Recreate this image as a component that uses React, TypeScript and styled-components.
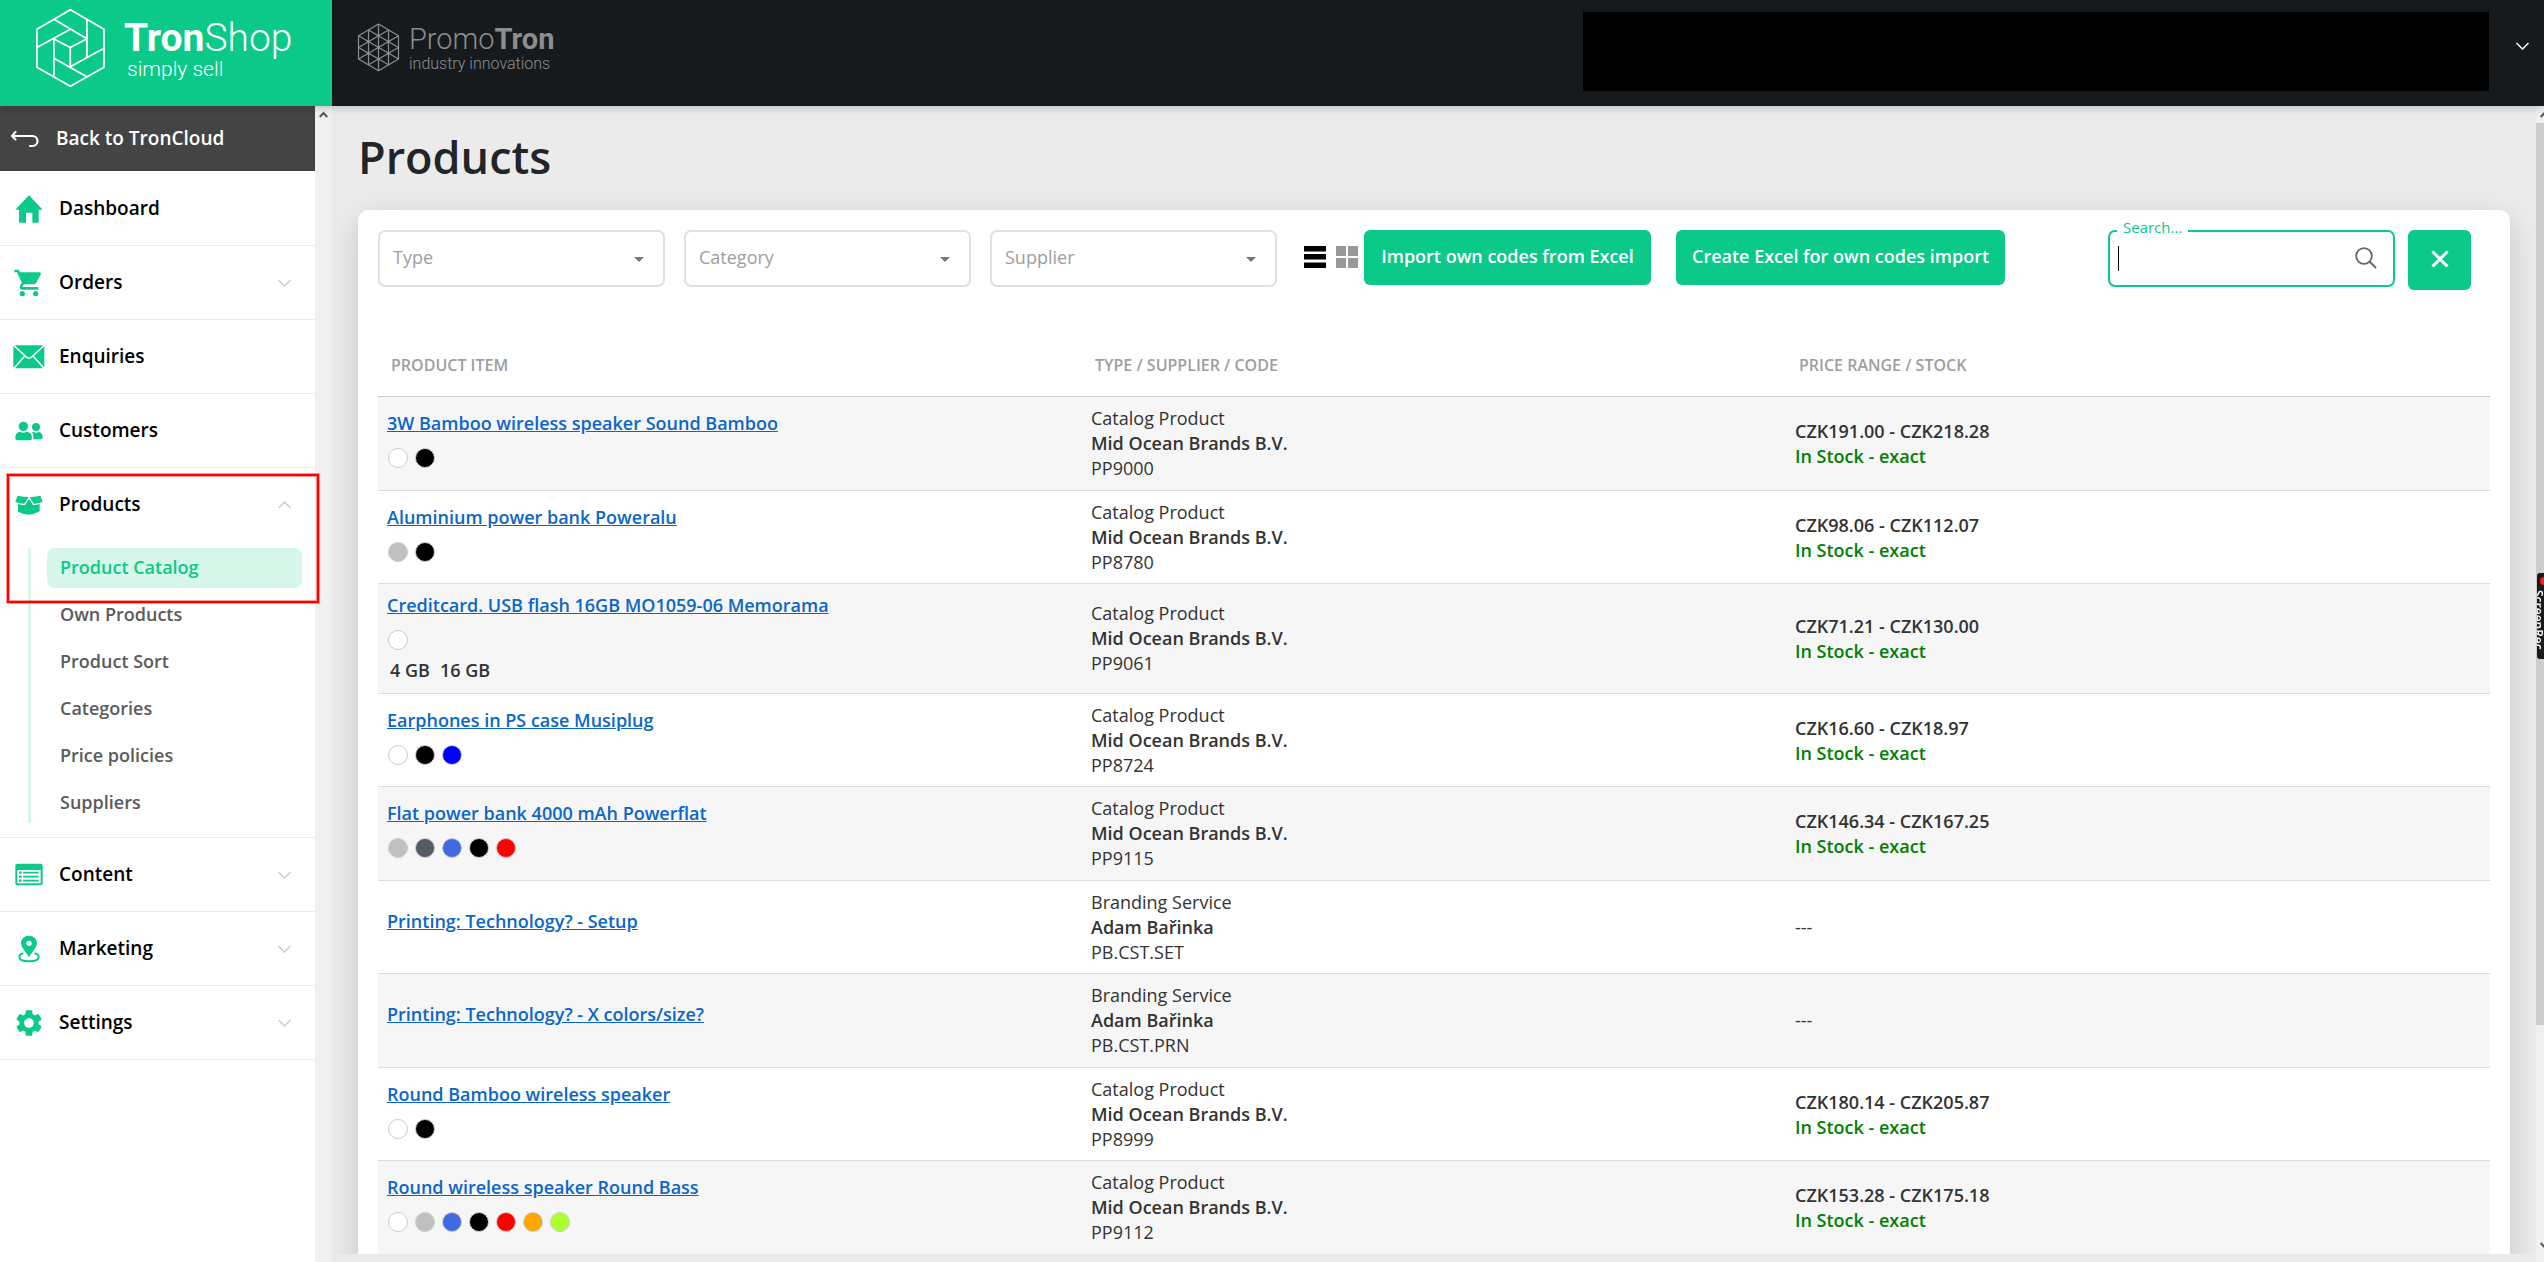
import React from 'react';
import styled, { createGlobalStyle } from 'styled-components';
import { MdSettings, MdShoppingCart } from 'react-icons/md';

const GREEN = '#0bc989';
const MINT = '#d6f6ea';
const LINE = '#ebebeb';

const GlobalStyle = createGlobalStyle`
  *, *::before, *::after { box-sizing: border-box; }
  html, body { margin: 0; padding: 0; }
  body {
    background: #ebebeb;
    color: #333;
    font-family: "Open Sans", "Noto Sans", sans-serif;
    font-size: 18px;
    line-height: 25px;
  }
  button, input, select { font: inherit; }
`;

/* ---------- shell ---------- */

const Shell = styled.div`
  display: flex;
  flex-direction: column;
  height: 100vh;
  overflow: hidden;
`;

const TopBar = styled.header`
  display: flex;
  flex: none;
  height: 106px;
  background: #161a1d;
  box-shadow: 0 2px 8px rgba(0, 0, 0, 0.2);
  z-index: 2;
`;

const Brand = styled.a`
  display: flex;
  gap: 18px;
  width: 332px;
  padding: 8px 0 0 35px;
  background: ${GREEN};
  color: #fff;
  text-decoration: none;
`;

const Partner = styled.a`
  display: flex;
  gap: 9px;
  padding: 23px 0 0 25px;
  color: #8c8d8e;
  text-decoration: none;
`;

const BrandWords = styled.span<{ $top?: number }>`
  display: flex;
  flex-direction: column;
  padding-top: ${(p) => p.$top ?? 0}px;
  font-family: Roboto, sans-serif;
  font-weight: 300;
`;

const BrandName = styled.span<{ $size: number; $line: number }>`
  font-size: ${(p) => p.$size}px;
  line-height: ${(p) => p.$line}px;
  b { font-weight: 700; }
`;

const BrandTag = styled.span<{ $size: number; $indent?: number }>`
  padding-left: ${(p) => p.$indent ?? 0}px;
  font-size: ${(p) => p.$size}px;
  line-height: 18px;
`;

const Account = styled.div`
  display: flex;
  align-items: flex-start;
  gap: 27px;
  margin-left: auto;
  padding: 12px 15px 0 0;
`;

const AccountPanel = styled.div`
  width: 906px;
  height: 79px;
  background: #000;
`;

const AccountToggle = styled.button`
  display: flex;
  margin-top: 30px;
  padding: 0;
  border: 0;
  background: none;
  color: #fff;
`;

const Body = styled.div`
  display: flex;
  flex: 1;
  min-height: 0;
`;

/* ---------- side menu ---------- */

const SideMenu = styled.nav`
  position: relative;
  z-index: 1;
  width: 315px;
  flex: none;
  background: #fff;
`;

const BackLink = styled.a`
  display: flex;
  align-items: center;
  gap: 17px;
  height: 65px;
  padding-left: 10px;
  background: #444;
  color: #fff;
  font-size: 19px;
  font-weight: 600;
  text-decoration: none;
`;

const MenuList = styled.ul`
  margin: 0;
  padding: 1px 0 0;
  list-style: none;
`;

const MenuItem = styled.li`
  position: relative;
  border-bottom: 1px solid ${LINE};
`;

const MenuLink = styled.a`
  display: grid;
  grid-template-columns: 32px 1fr 13px;
  column-gap: 14px;
  align-items: center;
  height: 73px;
  padding: 0 24px 0 13px;
  color: #000;
  font-size: 19px;
  font-weight: 600;
  text-decoration: none;
  svg { display: block; }
`;

const MenuIcon = styled.span`
  display: flex;
  justify-content: center;
  color: ${GREEN};
`;

const MenuChevron = styled.span`
  color: #ccc;
`;

const SubList = styled.ul`
  display: flex;
  flex-direction: column;
  gap: 7px;
  margin: 7px 13px 14px 28px;
  padding: 0 0 0 16px;
  border-left: 3px solid ${MINT};
  list-style: none;
`;

const SubLink = styled.a<{ $active?: boolean }>`
  display: flex;
  align-items: center;
  height: 40px;
  padding: 0 0 1px 13px;
  border-radius: 8px;
  background: ${(p) => (p.$active ? MINT : 'transparent')};
  color: ${(p) => (p.$active ? GREEN : '#5a5a5a')};
  font-weight: 600;
  text-decoration: none;
`;

const Highlight = styled.div`
  position: absolute;
  top: 6px;
  left: 7px;
  width: 312px;
  height: 129px;
  border: 2px solid #f00;
  box-shadow: 0 0 0 1px rgba(255, 0, 0, 0.4), inset 0 0 0 1px rgba(255, 0, 0, 0.4);
  pointer-events: none;
`;

/* ---------- scroll bars ---------- */

const ScrollTrack = styled.div<{ $wide?: boolean }>`
  display: flex;
  flex-direction: column;
  flex: none;
  width: ${(p) => (p.$wide ? 17 : 8)}px;
  background: #f0f0f0;
  color: #555;
  overflow: hidden;
  svg { display: block; flex: none; margin: 4px; }
`;

const ScrollThumb = styled.div`
  flex: 0 0 78%;
  background: #cdcdcd;
`;

const ScrollEnd = styled.div`
  margin-top: auto;
  padding-bottom: 8px;
`;

const RecorderTab = styled.aside`
  position: fixed;
  top: 573px;
  right: 0;
  display: flex;
  flex-direction: column;
  gap: 5px;
  width: 7px;
  height: 86px;
  padding: 4px 0 0 3px;
  border-radius: 3px 0 0 3px;
  background: #1a1a1a;
  color: #fff;
  font-size: 12px;
  font-weight: 600;
  line-height: 12px;
  overflow: hidden;
  z-index: 3;
`;

const RecorderDot = styled.span`
  flex: none;
  width: 8px;
  height: 8px;
  border-radius: 50%;
  background: #e22;
`;

const RecorderText = styled.span`
  writing-mode: vertical-rl;
`;

/* ---------- page ---------- */

const Main = styled.main`
  flex: 1;
  min-width: 0;
  margin-bottom: 8px;
  padding: 22px 26px 0;
  overflow: hidden;
`;

const Title = styled.h1`
  margin: 0 0 24px;
  color: #212529;
  font-size: 45px;
  font-weight: 600;
  line-height: 58px;
`;

const Card = styled.section`
  padding: 20px;
  border-radius: 10px;
  background: #fff;
  box-shadow: 0 10px 30px rgba(0, 0, 0, 0.16);
`;

const Toolbar = styled.div`
  display: flex;
  align-items: flex-start;
  height: 60px;
  padding-right: 19px;
`;

const Filters = styled.div`
  display: flex;
  gap: 19px;
`;

const Field = styled.div`
  position: relative;
  width: 287px;
`;

const Select = styled.select`
  width: 100%;
  height: 57px;
  padding: 0 13px 3px;
  border: 2px solid #e0e0e0;
  border-radius: 7px;
  background: #fff;
  color: #9e9e9e;
  appearance: none;
`;

const SelectArrow = styled.span`
  position: absolute;
  top: 27px;
  right: 21px;
  border: 5px solid transparent;
  border-top-color: #777;
  border-bottom: 0;
`;

const ViewSwitch = styled.div`
  display: flex;
  gap: 10px;
  height: 55px;
  margin: 0 6px 0 27px;
`;

const ViewButton = styled.button<{ $on?: boolean }>`
  padding: 0 0 1px;
  border: 0;
  background: none;
  color: ${(p) => (p.$on ? '#000' : '#999')};
  svg { display: block; }
`;

const Actions = styled.div`
  display: flex;
  gap: 25px;
`;

const Button = styled.button<{ $width: number; $tall?: boolean }>`
  display: flex;
  align-items: center;
  justify-content: center;
  width: ${(p) => p.$width}px;
  height: ${(p) => (p.$tall ? 60 : 55)}px;
  padding: 0 0 2px;
  border: 0;
  border-radius: 6px;
  background: ${GREEN};
  color: #fff;
  font-weight: 600;
  white-space: nowrap;
`;

const SearchGroup = styled.div`
  display: flex;
  gap: 13px;
  margin-left: auto;
`;

const SearchInput = styled.input`
  display: block;
  width: 100%;
  height: 57px;
  padding: 0 50px 0 8px;
  border: 2px solid ${GREEN};
  border-radius: 7px;
  background: #fff linear-gradient(#000, #000) 8px 14px / 1px 25px no-repeat;
  caret-color: transparent;
  outline: none;
`;

const SearchLabel = styled.label`
  position: absolute;
  top: -13px;
  left: 9px;
  padding: 0 6px;
  background: #fff;
  color: ${GREEN};
  font-size: 15px;
  line-height: 20px;
`;

const SearchIcon = styled.span`
  position: absolute;
  top: 17px;
  right: 18px;
  color: #666;
  svg { display: block; }
`;

/* ---------- table ---------- */

const Table = styled.table`
  width: 100%;
  margin-top: 46px;
  border-collapse: separate;
  border-spacing: 0;
  table-layout: fixed;
`;

const HeadCell = styled.th`
  height: 61px;
  padding: 0 13px 1px;
  border-bottom: 1px solid #ccc;
  color: #9e9e9e;
  font-size: 16px;
  font-weight: 600;
  text-align: left;
`;

const Row = styled.tr`
  &:nth-child(odd) { background: #f6f6f6; }
  &:nth-child(even) td { padding-bottom: 8px; }
`;

const Cell = styled.td`
  padding: 9px;
  border-bottom: 1px solid #ddd;
  vertical-align: middle;
`;

const ProductLink = styled.a`
  display: inline-block;
  color: #0b66c9;
  font-weight: 600;
  text-decoration: underline;
  vertical-align: top;
`;

const Swatches = styled.div`
  display: flex;
  gap: 7px;
  padding: 4px 0 8px 1px;
`;

const Swatch = styled.span<{ $color: string }>`
  width: 20px;
  height: 20px;
  margin-top: 8px;
  border: 1px solid #ccc;
  border-radius: 50%;
  background: ${(p) => p.$color};
`;

const Sizes = styled.div`
  display: flex;
  gap: 10px;
  padding: 0 0 1px 3px;
  font-weight: 600;
`;

const Strong = styled.div`
  font-weight: 600;
`;

const Stock = styled.div`
  color: #008000;
  font-weight: 600;
`;

/* ---------- drawings ---------- */

const TronShopMark = () => (
  <svg width="71" height="80" viewBox="35 8 71 80" fill="none" stroke="#fff" strokeWidth="1.7" strokeLinejoin="round">
    <path d="M70.4 9.7 104 29.3V67.3L70.4 86.3 36.9 67.3V29.3Z" />
    <path d="M53.9 19.3 86.9 38.7 70.3 47.5 53.9 39M36.9 47.5 70.3 29.3M53.9 39V76M53.9 58.3 86.9 76.7M104 48.3 70.3 66.7V47.5M86.9 20V57" />
  </svg>
);

const PromoTronMark = () => (
  <svg width="43" height="49" viewBox="357 23 43 49" fill="none" stroke="#8c8d8e" strokeWidth="1.2" strokeLinejoin="round">
    <path d="M378.5 24 398.5 35.7V59L378.5 70.7 358.5 59V35.7Z" />
    <path d="M368.5 29.9V64.8M378.5 24V70.7M388.5 29.9V64.8" />
    <path d="M358.5 35.7 398.5 59M368.5 29.9 398.5 47.4M358.5 47.4 388.5 64.8" />
    <path d="M398.5 35.7 358.5 59M388.5 29.9 358.5 47.4M398.5 47.4 368.5 64.8" />
    <g fill="#8c8d8e" stroke="none">
      <circle cx="368.5" cy="41.5" r="1.6" /><circle cx="378.5" cy="35.7" r="1.6" /><circle cx="388.5" cy="41.5" r="1.6" />
      <circle cx="368.5" cy="53.2" r="1.6" /><circle cx="378.5" cy="47.4" r="1.6" /><circle cx="388.5" cy="53.2" r="1.6" />
      <circle cx="378.5" cy="59" r="1.6" />
    </g>
  </svg>
);

const BackArrow = () => (
  <svg width="29" height="18" viewBox="0 0 29 18" fill="none" stroke="#fff" strokeWidth="2.2" strokeLinecap="round" strokeLinejoin="round">
    <path d="M2 6H22.5A5 5 0 0 1 22.5 16H20M5.5 2 2 6 5.5 9.5" />
  </svg>
);

const Chevron = ({ up }: { up?: boolean }) => (
  <svg width="13" height="8" viewBox="0 0 13 8" fill="none" stroke="currentColor" strokeWidth="1.5">
    <path d={up ? 'M.5 7 6.5 1 12.5 7' : 'M.5 1 6.5 7 12.5 1'} />
  </svg>
);

const ScrollArrow = ({ down }: { down?: boolean }) => (
  <svg width="9" height="9" viewBox="0 0 9 9" fill="none" stroke="currentColor" strokeWidth="2">
    <path d={down ? 'M.7 2 4.5 6 8.3 2' : 'M.7 7 4.5 3 8.3 7'} />
  </svg>
);

const HomeIcon = () => (
  <svg width="32" height="32" viewBox="40 94 96 96" fill="currentColor">
    <path d="M88 101 129 144H117V183H98V153H79V183H58V144H47Z" />
  </svg>
);

const MailIcon = () => (
  <svg width="32" height="24" viewBox="0 0 96 72">
    <rect x="1" y="1" width="93" height="69" rx="6" fill="currentColor" />
    <path d="M3 2 40 36Q48 43 56 36L93 2M3 70 35 33M93 70 60 33" fill="none" stroke="#fff" strokeWidth="4.5" />
  </svg>
);

const CustomersIcon = () => (
  <svg width="28" height="20" viewBox="46 782 84 60" fill="currentColor">
    <circle cx="71" cy="798" r="14" />
    <path d="M47 834C47 820 54 815 62 815Q71 820 80 815C90 815 97 820 97 834Q97 840 91 840H53Q47 840 47 834Z" />
    <circle cx="109" cy="800" r="12" />
    <path d="M97 815H102Q109 819 116 815C124 815 129 821 129 831Q129 837 123 837H101C102 828 101 821 97 815Z" />
  </svg>
);

const BoxIcon = () => (
  <svg width="28" height="20" viewBox="46 79 84 60" fill="currentColor">
    <path d="M54 81Q72 85 87 85L74 105Q60 106 47 99ZM122 81Q104 85 90 85L102 105Q116 106 129 99Z" />
    <path d="M55 106Q67 110 76 109L88 91 100 109Q110 110 120 106V128Q104 137 88 138 70 137 55 129Z" />
  </svg>
);

const ContentIcon = () => (
  <svg width="28" height="23" viewBox="46 128 84 69">
    <rect x="47" y="130" width="82" height="65" rx="6" fill="currentColor" />
    <rect x="53" y="149" width="70" height="40" fill="#fff" />
    <path d="M58 157H66M58 169H66M58 181H66" stroke="currentColor" strokeWidth="7" />
    <path d="M70 157H117M70 169H117M70 181H117" stroke="currentColor" strokeWidth="5" />
  </svg>
);

const PinIcon = () => (
  <svg width="28" height="28" viewBox="45 343 84 84">
    <path d="M87 345C74 345 63 354 63 368 63 380 78 394 87 410 96 394 111 380 111 368 111 354 100 345 87 345Z" fill="currentColor" />
    <circle cx="87" cy="368" r="8" fill="#fff" />
    <path d="M70 398C61 400 58 404 58 409 58 418 71 422 87 422S116 418 116 409C116 404 113 400 104 398" fill="none" stroke="currentColor" strokeWidth="6" />
  </svg>
);

const ListViewIcon = () => (
  <svg width="22" height="22" viewBox="0 0 22 22" fill="currentColor">
    <path d="M0 0H22V5.5H0ZM0 8H22V13.5H0ZM0 16.5H22V22H0Z" />
  </svg>
);

const GridViewIcon = () => (
  <svg width="22" height="22" viewBox="0 0 22 22" fill="currentColor">
    <path d="M0 0H10V10H0ZM12 0H22V10H12ZM0 12H10V22H0ZM12 12H22V22H12Z" />
  </svg>
);

const Magnifier = () => (
  <svg width="22" height="22" viewBox="0 0 22 22" fill="none" stroke="currentColor" strokeWidth="1.8">
    <circle cx="9" cy="9" r="7.8" />
    <path d="M14.5 14.5 21 21" />
  </svg>
);

const Cross = () => (
  <svg width="18" height="18" viewBox="0 0 18 18" fill="none" stroke="currentColor" strokeWidth="3">
    <path d="M1.5 1.5 16.5 16.5M16.5 1.5 1.5 16.5" />
  </svg>
);

/* ---------- data ---------- */

type Entry = { label: string; icon: React.ReactNode; children?: string[]; expandable?: boolean };

const MENU: Entry[] = [
  { label: 'Dashboard', icon: <HomeIcon /> },
  { label: 'Orders', icon: <MdShoppingCart size={32} />, expandable: true },
  { label: 'Enquiries', icon: <MailIcon /> },
  { label: 'Customers', icon: <CustomersIcon /> },
  {
    label: 'Products',
    icon: <BoxIcon />,
    expandable: true,
    children: ['Product Catalog', 'Own Products', 'Product Sort', 'Categories', 'Price policies', 'Suppliers'],
  },
  { label: 'Content', icon: <ContentIcon />, expandable: true },
  { label: 'Marketing', icon: <PinIcon />, expandable: true },
  { label: 'Settings', icon: <MdSettings size={34} />, expandable: true },
];

type Product = {
  name: string;
  colors?: string[];
  sizes?: string[];
  type: string;
  supplier: string;
  code: string;
  price?: string;
};

const MOB = 'Mid Ocean Brands B.V.';
const CATALOG = 'Catalog Product';

const PRODUCTS: Product[] = [
  { name: '3W Bamboo wireless speaker Sound Bamboo', colors: ['#fff', '#000'], type: CATALOG, supplier: MOB, code: 'PP9000', price: 'CZK191.00 - CZK218.28' },
  { name: 'Aluminium power bank Poweralu', colors: ['#c0c0c0', '#000'], type: CATALOG, supplier: MOB, code: 'PP8780', price: 'CZK98.06 - CZK112.07' },
  { name: 'Creditcard. USB flash 16GB MO1059-06 Memorama', colors: ['#fff'], sizes: ['4 GB', '16 GB'], type: CATALOG, supplier: MOB, code: 'PP9061', price: 'CZK71.21 - CZK130.00' },
  { name: 'Earphones in PS case Musiplug', colors: ['#fff', '#000', '#00f'], type: CATALOG, supplier: MOB, code: 'PP8724', price: 'CZK16.60 - CZK18.97' },
  { name: 'Flat power bank 4000 mAh Powerflat', colors: ['#c0c0c0', '#535b63', '#4169e1', '#000', '#f00'], type: CATALOG, supplier: MOB, code: 'PP9115', price: 'CZK146.34 - CZK167.25' },
  { name: 'Printing: Technology? - Setup', type: 'Branding Service', supplier: 'Adam Bařinka', code: 'PB.CST.SET' },
  { name: 'Printing: Technology? - X colors/size?', type: 'Branding Service', supplier: 'Adam Bařinka', code: 'PB.CST.PRN' },
  { name: 'Round Bamboo wireless speaker', colors: ['#fff', '#000'], type: CATALOG, supplier: MOB, code: 'PP8999', price: 'CZK180.14 - CZK205.87' },
  { name: 'Round wireless speaker Round Bass', colors: ['#fff', '#c0c0c0', '#4169e1', '#000', '#f00', '#ffa500', '#adff2f'], type: CATALOG, supplier: MOB, code: 'PP9112', price: 'CZK153.28 - CZK175.18' },
];

const FILTERS = ['Type', 'Category', 'Supplier'];

export default function App() {
  return (
    <Shell>
      <GlobalStyle />
      <TopBar>
        <Brand href="#">
          <TronShopMark />
          <BrandWords $top={9}>
            <BrandName $size={39} $line={43}><b>Tron</b>Shop</BrandName>
            <BrandTag $size={21} $indent={3}>simply sell</BrandTag>
          </BrandWords>
        </Brand>
        <Partner href="#">
          <PromoTronMark />
          <BrandWords>
            <BrandName $size={29} $line={32}>Promo<b>Tron</b></BrandName>
            <BrandTag $size={16}>industry innovations</BrandTag>
          </BrandWords>
        </Partner>
        <Account>
          <AccountPanel />
          <AccountToggle aria-label="Account menu"><Chevron /></AccountToggle>
        </Account>
      </TopBar>

      <Body>
        <SideMenu>
          <BackLink href="#"><BackArrow />Back to TronCloud</BackLink>
          <MenuList>
            {MENU.map((item) => (
              <MenuItem key={item.label}>
                <MenuLink href="#">
                  <MenuIcon>{item.icon}</MenuIcon>
                  {item.label}
                  {item.expandable && <MenuChevron><Chevron up={!!item.children} /></MenuChevron>}
                </MenuLink>
                {item.children && (
                  <>
                    <SubList>
                      {item.children.map((child, i) => (
                        <li key={child}><SubLink href="#" $active={i === 0}>{child}</SubLink></li>
                      ))}
                    </SubList>
                    <Highlight />
                  </>
                )}
              </MenuItem>
            ))}
          </MenuList>
        </SideMenu>
        <ScrollTrack $wide><ScrollArrow /></ScrollTrack>

        <Main>
          <Title>Products</Title>
          <Card>
            <Toolbar>
              <Filters>
                {FILTERS.map((name) => (
                  <Field key={name}>
                    <Select aria-label={name} defaultValue="">
                      <option value="">{name}</option>
                    </Select>
                    <SelectArrow />
                  </Field>
                ))}
              </Filters>
              <ViewSwitch>
                <ViewButton $on aria-label="List view"><ListViewIcon /></ViewButton>
                <ViewButton aria-label="Grid view"><GridViewIcon /></ViewButton>
              </ViewSwitch>
              <Actions>
                <Button $width={287}>Import own codes from Excel</Button>
                <Button $width={329}>Create Excel for own codes import</Button>
              </Actions>
              <SearchGroup>
                <Field>
                  <SearchInput id="search" type="text" />
                  <SearchLabel htmlFor="search">Search...</SearchLabel>
                  <SearchIcon><Magnifier /></SearchIcon>
                </Field>
                <Button $width={63} $tall aria-label="Clear search"><Cross /></Button>
              </SearchGroup>
            </Toolbar>

            <Table>
              <thead>
                <tr>
                  <HeadCell>PRODUCT ITEM</HeadCell>
                  <HeadCell>TYPE / SUPPLIER / CODE</HeadCell>
                  <HeadCell>PRICE RANGE / STOCK</HeadCell>
                </tr>
              </thead>
              <tbody>
                {PRODUCTS.map((p) => (
                  <Row key={p.name}>
                    <Cell>
                      <ProductLink href="#">{p.name}</ProductLink>
                      <Swatches>
                        {p.colors?.map((c) => <Swatch key={c} $color={c} />)}
                      </Swatches>
                      {p.sizes && <Sizes>{p.sizes.map((s) => <span key={s}>{s}</span>)}</Sizes>}
                    </Cell>
                    <Cell>
                      <div>{p.type}</div>
                      <Strong>{p.supplier}</Strong>
                      <div>{p.code}</div>
                    </Cell>
                    <Cell>
                      {p.price ? (
                        <>
                          <Strong>{p.price}</Strong>
                          <Stock>In Stock - exact</Stock>
                        </>
                      ) : (
                        '---'
                      )}
                    </Cell>
                  </Row>
                ))}
              </tbody>
            </Table>
          </Card>
        </Main>
        <ScrollTrack>
          <ScrollArrow />
          <ScrollThumb />
          <ScrollEnd><ScrollArrow down /></ScrollEnd>
        </ScrollTrack>
      </Body>

      <RecorderTab>
        <RecorderDot />
        <RecorderText>ScreenRec</RecorderText>
      </RecorderTab>
    </Shell>
  );
}
